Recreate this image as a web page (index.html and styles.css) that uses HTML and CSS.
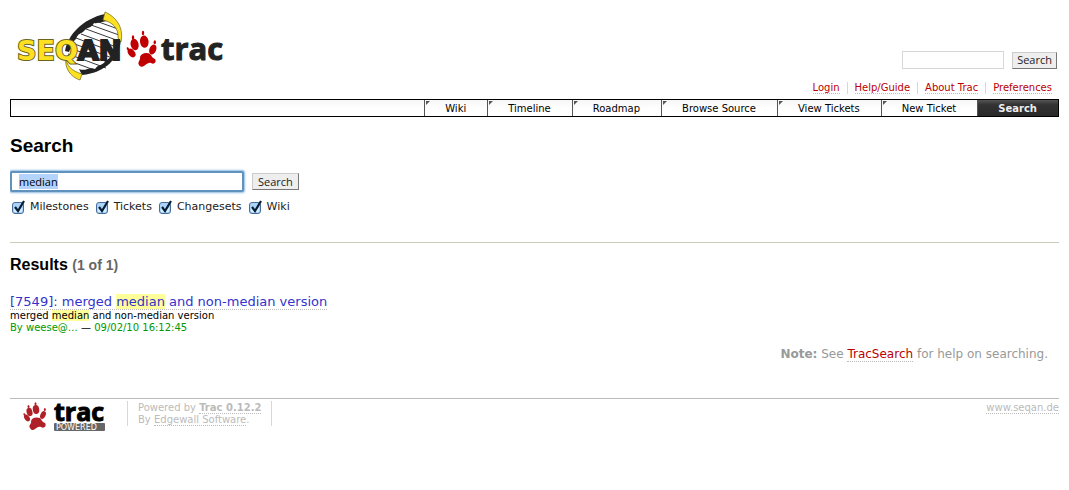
FILE: index.html
```html
<!DOCTYPE html>
<html lang="en">
<head>
<meta charset="utf-8">
<title>Search – SeqAn Trac</title>
<link rel="stylesheet" href="styles.css">
</head>
<body>
<header class="banner">
  <a class="logo" href="#" aria-label="SeqAn Trac">
    <svg width="216" height="74" viewBox="12 8 216 74" aria-hidden="true">
      <path d="M66 61C64 43 78 22 106 15L119 32C123 50 107 70 82 74Z" fill="#fff"/>
      <g stroke="#222" stroke-width=".9">
        <path d="M96 21l22 8M91 25l28 10M86 29l33 12M81 34l38 14M76 38l40 15M72 43l43 16M70 48l40 15M68 54l38 14M67 60l30 11"/>
      </g>
      <path d="M65 51C68 35 82 19 105 14L110 21C102 21 98 24 94 23C92 28 87 27 84 31C81 34 78 33 76 39C72 42 72 46 69 52Z" fill="#222"/>
      <path d="M121 37C121 57 106 73 82 75L79 69C86 72 89 66 95 69C98 64 103 66 106 60C111 59 111 54 114 51C114 46 117 44 118 39Z" fill="#222"/>
      <path d="M105 12C116 17 124 27 121 42L118 38C119 28 112 22 103 20Z" fill="#fbe122" stroke="#6b631e" stroke-width=".7"/>
      <path d="M66 57C66 66 72 71 82 74L80 80C70 77 64 67 66 57Z" fill="#fbe122" stroke="#6b631e" stroke-width=".7"/>
      <text class="logo-seq" x="17" y="60">SEQ<tspan class="logo-an">AN</tspan></text>
      <g fill="#c00000">
        <path d="M139 65C137 62 141 60 140 57C141 53 147 52 150 54C152 56 152 58 155 59C157 62 154 65 151 63C148 62 146 65 144 66C142 67 140 67 139 65Z"/>
        <ellipse cx="144.300" cy="41.700" rx="4.300" ry="6.200" transform="rotate(-8 144.300 41.700)"/>
        <ellipse cx="134.600" cy="44.500" rx="4" ry="5.800" transform="rotate(-12 134.600 44.500)"/>
        <ellipse cx="152.800" cy="49.500" rx="3.400" ry="5.200" transform="rotate(22 152.800 49.500)"/>
        <ellipse cx="131.600" cy="53" rx="3.200" ry="4.800" transform="rotate(-38 131.600 53)"/>
        <ellipse cx="143" cy="33" rx="1.200" ry="2.300"/>
        <ellipse cx="133" cy="37.500" rx="1.200" ry="2.200"/>
        <ellipse cx="154.800" cy="42.300" rx="1.200" ry="2"/>
        <ellipse cx="128" cy="49" rx="1.100" ry="1.900" transform="rotate(-30 128 49)"/>
      </g>
      <text class="logo-trac" x="161" y="60">trac</text>
    </svg>
  </a>
  <div class="banner-tools">
    <form class="quick-search">
      <input class="quick-input" type="text" aria-label="Quick search">
      <button class="button quick-button" type="button">Search</button>
    </form>
    <nav class="metanav" aria-label="Account">
      <span class="meta-item"><a class="link" href="#">Login</a></span>
      <span class="meta-item"><a class="link" href="#">Help/Guide</a></span>
      <span class="meta-item"><a class="link" href="#">About Trac</a></span>
      <span class="meta-item"><a class="link" href="#">Preferences</a></span>
    </nav>
  </div>
</header>

<nav class="mainnav" aria-label="Main">
  <a class="tab" href="#">Wiki</a>
  <a class="tab" href="#">Timeline</a>
  <a class="tab" href="#">Roadmap</a>
  <a class="tab" href="#">Browse Source</a>
  <a class="tab" href="#">View Tickets</a>
  <a class="tab" href="#">New Ticket</a>
  <a class="tab tab-active" href="#" aria-current="page">Search</a>
</nav>

<main>
  <h1 class="title">Search</h1>
  <form>
    <div class="search-row">
      <input class="search-input" id="q" type="text" value="median" aria-label="Search terms">
      <button class="button" type="button">Search</button>
    </div>
    <div class="filters">
      <label class="filter"><input class="check" type="checkbox" checked>Milestones</label>
      <label class="filter"><input class="check" type="checkbox" checked>Tickets</label>
      <label class="filter"><input class="check" type="checkbox" checked>Changesets</label>
      <label class="filter"><input class="check" type="checkbox" checked>Wiki</label>
    </div>
  </form>
  <section class="results">
    <h2 class="results-title">Results <span class="results-count">(1 of 1)</span></h2>
    <div class="result-head"><a class="result-link" href="#">[7549]: merged <mark class="hit">median</mark> and non-median version</a></div>
    <div class="result-text">merged <mark class="hit">median</mark> and non-median version</div>
    <div class="result-text"><span class="author">By weese@…</span> — <span class="author">09/02/10 16:12:45</span></div>
  </section>
  <p class="note"><strong>Note:</strong> See <a class="link" href="#">TracSearch</a> for help on searching.</p>
</main>

<footer class="footer">
  <a class="powered-logo" href="#" aria-label="Trac Powered">
    <svg width="84" height="31" viewBox="22 400 84 31" aria-hidden="true">
      <g fill="#b02028">
        <path d="M30 427C28 424 32 423 31 420C32 416 37 416 40 417C42 419 42 421 45 422C47 425 44 428 41 426C38 425 37 427 35 428C33 430 31 429 30 427Z"/>
        <ellipse cx="36" cy="408.500" rx="3.200" ry="4.500" transform="rotate(-8 36 408.500)"/>
        <ellipse cx="29.500" cy="411" rx="2.900" ry="4.200" transform="rotate(-16 29.500 411)"/>
        <ellipse cx="43" cy="414" rx="2.600" ry="4" transform="rotate(24 43 414)"/>
        <ellipse cx="27" cy="417" rx="2.400" ry="3.700" transform="rotate(-38 27 417)"/>
        <ellipse cx="35.500" cy="402.700" rx="1" ry="1.500"/>
        <ellipse cx="28.500" cy="405.500" rx="1" ry="1.500"/>
        <ellipse cx="44.800" cy="408.500" rx="1" ry="1.500"/>
        <ellipse cx="24.500" cy="413.500" rx="1" ry="1.400" transform="rotate(-30 24.500 413.500)"/>
      </g>
      <text class="powered-trac" x="54" y="420">trac</text>
      <rect x="54" y="422" width="51" height="8" rx="1" fill="#666"/>
      <text class="powered-word" x="56" y="429">POWERED</text>
    </svg>
  </a>
  <p class="powered-by">Powered by <a class="foot-link" href="#"><strong>Trac 0.12.2</strong></a><br>By <a class="foot-link" href="#">Edgewall Software</a>.</p>
  <p class="site"><a class="foot-link" href="#">www.seqan.de</a></p>
</footer>
<script src="script.js"></script>
</body>
</html>
```
FILE: styles.css
```css
* { box-sizing: border-box; }
body {
  margin: 8px 10px;
  background: #fff;
  color: #000;
  font: 13px/16px "DejaVu Sans", sans-serif;
}
a { text-decoration: none; }
.link { color: #b00; border-bottom: 1px dotted #bbb; }

.banner { display: flex; justify-content: space-between; align-items: flex-end; height: 91px; }
.logo { align-self: flex-start; margin-left: 2px; }
.logo svg, .powered-logo svg { display: block; overflow: visible; }
.logo-seq {
  font: bold 27px "DejaVu Sans", sans-serif;
  fill: #fbe122;
  stroke: #6b631e;
  stroke-width: 2px;
  paint-order: stroke;
}
.logo-an { fill: #222; stroke: #222; }
.logo-trac { font: bold 31px "Open Sans", sans-serif; fill: #222; stroke: #222; stroke-width: 1px; }

.banner-tools { display: flex; flex-direction: column; align-items: flex-end; }
.quick-search { display: flex; align-items: center; gap: 8px; padding-right: 2px; }
.quick-input { width: 102px; height: 18px; border: 1px solid #d7d7d7; background: #fff; }
.button {
  height: 17px;
  padding: 0 5px;
  border: 1px solid;
  border-color: #ccc #777 #777 #ccc;
  background: #eee;
  color: #222;
  font: 11px/14px "Open Sans", sans-serif;
}
.quick-button { padding: 0 4px; }
.metanav { display: flex; padding: 13px 0 5px; font-size: 10px; line-height: 12px; }
.meta-item { padding: 0 7px; border-left: 1px solid #d7d7d7; }
.meta-item:first-child { border-left: 0; }

.mainnav {
  display: flex;
  justify-content: flex-end;
  height: 18px;
  border: 1px solid #000;
  background: linear-gradient(#f7f7f7, #fff 60%);
  font-size: 10px;
  line-height: 17px;
}
.tab { position: relative; padding: 0 21px 0 20px; border-left: 1px solid #555; color: #000; }
.tab::before {
  content: "";
  position: absolute;
  left: 1px;
  top: 1px;
  border-top: 4px solid #555;
  border-right: 4px solid transparent;
}
.tab-active { background: linear-gradient(#555, #333 30%, #2a2a2a); color: #eee; font-weight: bold; }
.tab-active::before { display: none; }

.title { margin: 18px 0 14px; font: bold 19px/22px "Liberation Sans", Arial, sans-serif; }
.search-row { display: flex; align-items: center; gap: 8px; }
.search-input {
  width: 234px;
  height: 21px;
  padding: 0 7px;
  border: 2px solid #5f93bd;
  outline: 0;
  border-radius: 2px;
  box-shadow: 0 0 2px 1px #8fbde4;
  font: 11px/16px "Open Sans", sans-serif;
}
.search-input::selection { background: #b3d3fd; color: #000; }
.filters { display: flex; gap: 5px; margin-top: 6px; font-size: 11px; line-height: 16px; color: #222; }
.filter { display: flex; align-items: center; gap: 3px; }
.check {
  appearance: none;
  width: 15px;
  height: 15px;
  margin: 2px 0 0 2px;
  background: url("data:image/svg+xml,%3Csvg xmlns='http://www.w3.org/2000/svg' viewBox='0 0 15 15'%3E%3Crect x='.5' y='2.500' width='11' height='11' rx='2.500' fill='%23acd4f8' stroke='%23476c9c'/%3E%3Cpath d='M2 8h8v4H2z' fill='%23d3efff'/%3E%3Cpath d='M3 7l3 4L12 1' fill='none' stroke='%23071d35' stroke-width='2.200'/%3E%3C/svg%3E");
}

.results { margin-top: 27px; border-top: 1px solid #ccccbb; }
.results-title { margin: 12px 0 19px; font: bold 16px/20px "Liberation Sans", Arial, sans-serif; }
.results-count { color: #666; font-size: 14px; }
.result-head { font-size: 13px; line-height: 16px; }
.result-link { color: #33c; border-bottom: 1px dotted #bbb; }
.hit { background: #ff9; color: inherit; }
.result-text { font-size: 10px; line-height: 12px; }
.author { color: #090; }
.note { margin: 12px 11px 36px; color: #999; font-size: 12px; line-height: 16px; text-align: right; }

.footer {
  display: flex;
  border-top: 1px solid #bbb;
  padding-top: 2px;
  color: #bbb;
  font-size: 10px;
  line-height: 12px;
}
.powered-logo { margin-left: 12px; }
.powered-trac { font: bold 25px "Open Sans", sans-serif; fill: #000; stroke: #000; stroke-width: 1px; }
.powered-word { font: 8px "DejaVu Sans", sans-serif; fill: #fff; }
.powered-by { margin: 0 0 6px 21px; padding: 1px 10px 0; border: 1px solid #d7d7d7; border-width: 0 1px; }
.foot-link { color: #bbb; border-bottom: 1px dotted #bbb; }
.site { margin: 0 0 0 auto; padding-top: 1px; }
```
FILE: script.js
```js
const query = document.getElementById("q");
query.focus();
query.select();
```
